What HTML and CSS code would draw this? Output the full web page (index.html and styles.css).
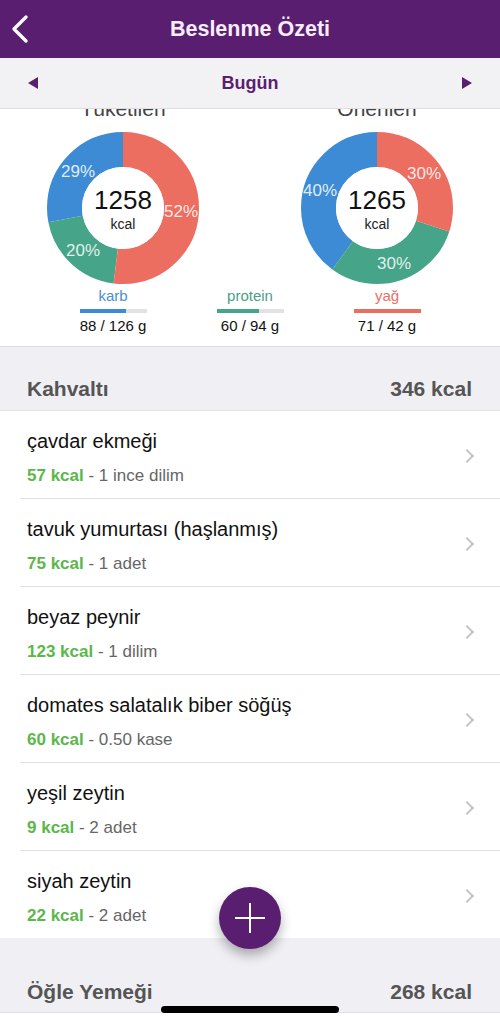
FILE: index.html
```html
<!DOCTYPE html>
<html lang="tr">
<head>
<meta charset="utf-8">
<title>Beslenme Özeti</title>
<link rel="stylesheet" href="styles.css">
</head>
<body>
<header class="topbar">
  <svg class="back" width="20" height="28" viewBox="0 0 20 28"><path d="M16 2 L4 14 L16 26" fill="none" stroke="#fff" stroke-width="3.2" stroke-linecap="round" stroke-linejoin="round"/></svg>
  <h1 class="title">Beslenme Özeti</h1>
</header>
<nav class="datebar">
  <span class="tri tri-left"></span>
  <span class="date">Bugün</span>
  <span class="tri tri-right"></span>
</nav>
<section class="charts">
  <div class="donuts">
    <div class="chart">
      <div class="chart-title">Tüketilen</div>
      <svg class="donut" width="154" height="154" viewBox="0 0 154 154">
        <g transform="rotate(-90 77 77)">
          <circle cx="77" cy="77" r="58.5" fill="none" stroke="#3d8bd4" stroke-width="35" pathLength="100" stroke-dasharray="29 71" stroke-dashoffset="-72"/>
          <circle cx="77" cy="77" r="58.5" fill="none" stroke="#46a488" stroke-width="35" pathLength="100" stroke-dasharray="20 80" stroke-dashoffset="-52"/>
          <circle cx="77" cy="77" r="58.5" fill="none" stroke="#ec6e61" stroke-width="35" pathLength="100" stroke-dasharray="52 48" stroke-dashoffset="0"/>
        </g>
        <circle cx="77" cy="77" r="41" fill="#fff"/>
        <text class="pct" x="32" y="40">29%</text>
        <text class="pct" x="135" y="80">52%</text>
        <text class="pct" x="37" y="119">20%</text>
        <text class="big" x="77" y="69">1258</text>
        <text class="unit" x="77" y="93">kcal</text>
      </svg>
    </div>
    <div class="chart">
      <div class="chart-title">Önerilen</div>
      <svg class="donut" width="154" height="154" viewBox="0 0 154 154">
        <g transform="rotate(-90 77 77)">
          <circle cx="77" cy="77" r="58.5" fill="none" stroke="#3d8bd4" stroke-width="35" pathLength="100" stroke-dasharray="40 60" stroke-dashoffset="-60"/>
          <circle cx="77" cy="77" r="58.5" fill="none" stroke="#46a488" stroke-width="35" pathLength="100" stroke-dasharray="30 70" stroke-dashoffset="-30"/>
          <circle cx="77" cy="77" r="58.5" fill="none" stroke="#ec6e61" stroke-width="35" pathLength="100" stroke-dasharray="30 70" stroke-dashoffset="0"/>
        </g>
        <circle cx="77" cy="77" r="41" fill="#fff"/>
        <text class="pct" x="124" y="42">30%</text>
        <text class="pct" x="94" y="132">30%</text>
        <text class="pct" x="20" y="59">40%</text>
        <text class="big" x="77" y="69">1265</text>
        <text class="unit" x="77" y="93">kcal</text>
      </svg>
    </div>
  </div>
  <div class="legend">
    <div class="macro">
      <span class="macro-name carb">karb</span>
      <span class="bar"><span class="fill fill-carb" style="width:70%"></span></span>
      <span class="macro-val">88 / 126 g</span>
    </div>
    <div class="macro">
      <span class="macro-name prot">protein</span>
      <span class="bar"><span class="fill fill-prot" style="width:64%"></span></span>
      <span class="macro-val">60 / 94 g</span>
    </div>
    <div class="macro">
      <span class="macro-name fat">yağ</span>
      <span class="bar"><span class="fill fill-fat" style="width:100%"></span></span>
      <span class="macro-val">71 / 42 g</span>
    </div>
  </div>
</section>

<div class="meal-head first">
  <span>Kahvaltı</span><span>346 kcal</span>
</div>
<ul class="items">
  <li class="item"><div class="item-text"><div class="name">çavdar ekmeği</div><div class="sub"><b>57 kcal</b> - 1 ince dilim</div></div><span class="chev"></span></li>
  <li class="item"><div class="item-text"><div class="name">tavuk yumurtası (haşlanmış)</div><div class="sub"><b>75 kcal</b> - 1 adet</div></div><span class="chev"></span></li>
  <li class="item"><div class="item-text"><div class="name">beyaz peynir</div><div class="sub"><b>123 kcal</b> - 1 dilim</div></div><span class="chev"></span></li>
  <li class="item"><div class="item-text"><div class="name">domates salatalık biber söğüş</div><div class="sub"><b>60 kcal</b> - 0.50 kase</div></div><span class="chev"></span></li>
  <li class="item"><div class="item-text"><div class="name">yeşil zeytin</div><div class="sub"><b>9 kcal</b> - 2 adet</div></div><span class="chev"></span></li>
  <li class="item"><div class="item-text"><div class="name">siyah zeytin</div><div class="sub"><b>22 kcal</b> - 2 adet</div></div><span class="chev"></span></li>
</ul>
<div class="meal-head second">
  <span>Öğle Yemeği</span><span>268 kcal</span>
</div>

<button class="fab" aria-label="Ekle"><span class="plus-h"></span><span class="plus-v"></span></button>
<div class="home-ind"></div>
</body>
</html>
```
FILE: styles.css
```css
* { box-sizing: border-box; }
html, body { margin: 0; padding: 0; }
body {
  font-family: "Liberation Sans", Arial, sans-serif;
  background: #fff;
  color: #111;
  width: 500px;
  height: 1024px;
  overflow: hidden;
}
.topbar {
  height: 58px;
  background: #5a1e71;
  display: flex;
  align-items: center;
  justify-content: center;
  position: relative;
}
.back { position: absolute; left: 10px; top: 15px; }
.title {
  margin: 0;
  color: #f7eef9;
  font-size: 21.5px;
  font-weight: 700;
}
.datebar {
  height: 51px;
  background: #f2f2f4;
  border-bottom: 1px solid #dedee2;
  display: flex;
  align-items: center;
  justify-content: space-between;
  padding: 0 28px;
  position: relative;
  z-index: 2;
}
.date { color: #5a1e71; font-weight: 700; font-size: 18px; }
.tri { width: 0; height: 0; border-top: 6px solid transparent; border-bottom: 6px solid transparent; }
.tri-left { border-right: 10px solid #5a1e71; }
.tri-right { border-left: 10px solid #5a1e71; }

.charts {
  overflow: hidden;
  padding-bottom: 11px;
  border-bottom: 1px solid #dcdce0;
}
.donuts { display: flex; justify-content: center; gap: 100px; }
.chart { display: flex; flex-direction: column; align-items: center; width: 154px; }
.chart-title {
  font-size: 21px;
  line-height: 24px;
  color: #444;
  margin-top: -12px;
  margin-bottom: 10px;
}
.donut { display: block; }
.pct {
  font-family: "Liberation Sans", Arial, sans-serif;
  font-size: 17px;
  fill: rgba(255,255,255,0.86);
  text-anchor: middle;
  dominant-baseline: central;
}
.big {
  font-family: "Liberation Sans", Arial, sans-serif;
  font-size: 26px;
  fill: #111;
  text-anchor: middle;
  dominant-baseline: central;
}
.unit {
  font-family: "Liberation Sans", Arial, sans-serif;
  font-size: 14px;
  fill: #222;
  text-anchor: middle;
  dominant-baseline: central;
}
.legend { display: flex; justify-content: center; gap: 57px; margin-top: 2px; }
.macro { width: 80px; display: flex; flex-direction: column; align-items: center; }
.macro-name { font-size: 15px; line-height: 17px; }
.carb { color: #4a8fd0; }
.prot { color: #48a088; }
.fat { color: #e86f66; }
.bar { width: 67px; height: 4px; background: #e2e2e4; margin-top: 5px; display: flex; }
.fill { height: 4px; display: block; }
.fill-carb { background: #3d8bd4; }
.fill-prot { background: #46a488; }
.fill-fat { background: #ec6e61; }
.macro-val { font-size: 15px; line-height: 18px; margin-top: 4px; color: #111; }

.meal-head {
  background: #efeff4;
  display: flex;
  justify-content: space-between;
  align-items: flex-end;
  padding: 0 28px 9px 27px;
  font-size: 21px;
  font-weight: 700;
  color: #555;
  border-bottom: 1px solid #e0e0e4;
}
.meal-head.first { height: 64px; }
.meal-head.second { height: 75px; padding-bottom: 8px; }

.items { list-style: none; margin: 0; padding: 0 0 0 20px; }
.item {
  display: flex;
  align-items: center;
  justify-content: space-between;
  border-bottom: 1px solid #e2e2e4;
  padding: 18px 28px 12px 7px;
  height: 88px;
}
.item:last-child { border-bottom: none; height: 87px; }
.name { font-size: 20px; line-height: 24px; color: #111; }
.sub { font-size: 17px; line-height: 20px; margin-top: 13px; color: #666; }
.sub b { color: #5bb74a; font-weight: 700; }
.chev {
  width: 10px; height: 10px;
  border-top: 2px solid #c4c4c8;
  border-right: 2px solid #c4c4c8;
  transform: rotate(45deg);
  margin-top: -4px;
}

.fab {
  position: fixed;
  left: 219px;
  top: 887px;
  width: 62px;
  height: 62px;
  border-radius: 50%;
  border: none;
  background: #5a1e71;
  box-shadow: 0 6px 12px rgba(0,0,0,0.3);
  padding: 0;
}
.plus-h { position: absolute; left: 16px; top: 30px; width: 30px; height: 2px; background: #fff; }
.plus-v { position: absolute; left: 30px; top: 16px; width: 2px; height: 30px; background: #fff; }
.home-ind {
  position: fixed;
  left: 161px;
  top: 1006px;
  width: 178px;
  height: 7px;
  border-radius: 4px;
  background: #000;
}
```
